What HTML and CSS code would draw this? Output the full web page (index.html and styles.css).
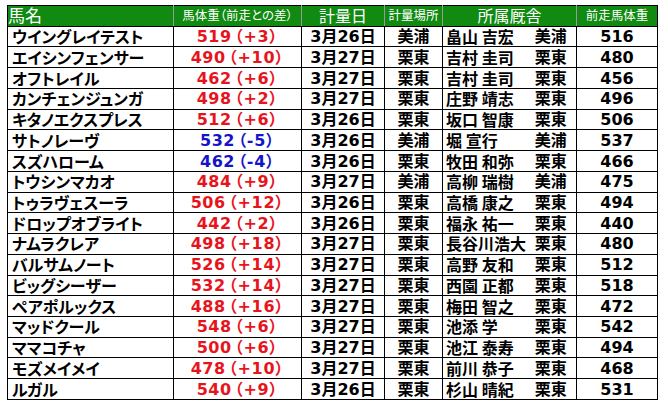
FILE: index.html
```html
<!DOCTYPE html>
<html lang="ja">
<head>
<meta charset="utf-8">
<title>馬体重</title>
<link rel="stylesheet" href="styles.css">
</head>
<body>
<table class="weights">
<colgroup>
<col class="c-name"><col class="c-wt"><col class="c-date"><col class="c-place"><col class="c-trainer"><col class="c-loc"><col class="c-prev">
</colgroup>
<thead>
<tr>
<th class="h-name">馬名</th>
<th class="h-small">馬体重（前走との差）</th>
<th class="h-mid">計量日</th>
<th class="h-small">計量場所</th>
<th class="h-mid" colspan="2">所属厩舎</th>
<th class="h-small">前走馬体重</th>
</tr>
</thead>
<tbody>
<tr><td class="name">ウイングレイテスト</td><td class="wt up">519<span class="diff">（+3）</span></td><td class="ctr">3月26日</td><td class="ctr">美浦</td><td class="trainer">畠山 吉宏</td><td class="loc">美浦</td><td class="ctr">516</td></tr>
<tr><td class="name">エイシンフェンサー</td><td class="wt up">490<span class="diff">（+10）</span></td><td class="ctr">3月27日</td><td class="ctr">栗東</td><td class="trainer">吉村 圭司</td><td class="loc">栗東</td><td class="ctr">480</td></tr>
<tr><td class="name">オフトレイル</td><td class="wt up">462<span class="diff">（+6）</span></td><td class="ctr">3月27日</td><td class="ctr">栗東</td><td class="trainer">吉村 圭司</td><td class="loc">栗東</td><td class="ctr">456</td></tr>
<tr><td class="name">カンチェンジュンガ</td><td class="wt up">498<span class="diff">（+2）</span></td><td class="ctr">3月27日</td><td class="ctr">栗東</td><td class="trainer">庄野 靖志</td><td class="loc">栗東</td><td class="ctr">496</td></tr>
<tr><td class="name">キタノエクスプレス</td><td class="wt up">512<span class="diff">（+6）</span></td><td class="ctr">3月26日</td><td class="ctr">栗東</td><td class="trainer">坂口 智康</td><td class="loc">栗東</td><td class="ctr">506</td></tr>
<tr><td class="name">サトノレーヴ</td><td class="wt down">532<span class="diff">（-5）</span></td><td class="ctr">3月26日</td><td class="ctr">美浦</td><td class="trainer">堀 宣行</td><td class="loc">美浦</td><td class="ctr">537</td></tr>
<tr><td class="name">スズハローム</td><td class="wt down">462<span class="diff">（-4）</span></td><td class="ctr">3月26日</td><td class="ctr">栗東</td><td class="trainer">牧田 和弥</td><td class="loc">栗東</td><td class="ctr">466</td></tr>
<tr><td class="name">トウシンマカオ</td><td class="wt up">484<span class="diff">（+9）</span></td><td class="ctr">3月27日</td><td class="ctr">美浦</td><td class="trainer">高柳 瑞樹</td><td class="loc">美浦</td><td class="ctr">475</td></tr>
<tr><td class="name">トゥラヴェスーラ</td><td class="wt up">506<span class="diff">（+12）</span></td><td class="ctr">3月26日</td><td class="ctr">栗東</td><td class="trainer">高橋 康之</td><td class="loc">栗東</td><td class="ctr">494</td></tr>
<tr><td class="name">ドロップオブライト</td><td class="wt up">442<span class="diff">（+2）</span></td><td class="ctr">3月26日</td><td class="ctr">栗東</td><td class="trainer">福永 祐一</td><td class="loc">栗東</td><td class="ctr">440</td></tr>
<tr><td class="name">ナムラクレア</td><td class="wt up">498<span class="diff">（+18）</span></td><td class="ctr">3月27日</td><td class="ctr">栗東</td><td class="trainer">長谷川浩大</td><td class="loc">栗東</td><td class="ctr">480</td></tr>
<tr><td class="name">バルサムノート</td><td class="wt up">526<span class="diff">（+14）</span></td><td class="ctr">3月27日</td><td class="ctr">栗東</td><td class="trainer">高野 友和</td><td class="loc">栗東</td><td class="ctr">512</td></tr>
<tr><td class="name">ビッグシーザー</td><td class="wt up">532<span class="diff">（+14）</span></td><td class="ctr">3月27日</td><td class="ctr">栗東</td><td class="trainer">西園 正都</td><td class="loc">栗東</td><td class="ctr">518</td></tr>
<tr><td class="name">ペアポルックス</td><td class="wt up">488<span class="diff">（+16）</span></td><td class="ctr">3月27日</td><td class="ctr">栗東</td><td class="trainer">梅田 智之</td><td class="loc">栗東</td><td class="ctr">472</td></tr>
<tr><td class="name">マッドクール</td><td class="wt up">548<span class="diff">（+6）</span></td><td class="ctr">3月27日</td><td class="ctr">栗東</td><td class="trainer">池添 学</td><td class="loc">栗東</td><td class="ctr">542</td></tr>
<tr><td class="name">ママコチャ</td><td class="wt up">500<span class="diff">（+6）</span></td><td class="ctr">3月27日</td><td class="ctr">栗東</td><td class="trainer">池江 泰寿</td><td class="loc">栗東</td><td class="ctr">494</td></tr>
<tr><td class="name">モズメイメイ</td><td class="wt up">478<span class="diff">（+10）</span></td><td class="ctr">3月27日</td><td class="ctr">栗東</td><td class="trainer">前川 恭子</td><td class="loc">栗東</td><td class="ctr">468</td></tr>
<tr><td class="name">ルガル</td><td class="wt up">540<span class="diff">（+9）</span></td><td class="ctr">3月26日</td><td class="ctr">栗東</td><td class="trainer">杉山 晴紀</td><td class="loc">栗東</td><td class="ctr">531</td></tr>
</tbody>
</table>
</body>
</html>
```

FILE: styles.css
```css
html, body {
  margin: 0;
  padding: 0;
  background: #ffffff;
}

body {
  padding: 5px 0 0 7px;
}

.weights {
  border-collapse: collapse;
  table-layout: fixed;
  width: 651px;
  font-family: "DejaVu Sans", "Noto Sans CJK JP", sans-serif;
  font-feature-settings: "palt";
  color: #000;
}

.c-name { width: 166px; }
.c-wt { width: 128px; }
.c-date { width: 83px; }
.c-place { width: 58px; }
.c-trainer { width: 83px; }
.c-loc { width: 51px; }
.c-prev { width: 81px; }

.weights tr {
  height: 20.74px;
}

.weights th {
  background: #108a10;
  color: #ffffff;
  font-family: "Noto Sans CJK JP", sans-serif;
  font-weight: 400;
  border: 1px solid #9a9a9a;
  border-top-color: #000;
  border-bottom-color: #000;
  padding: 0;
  line-height: 18px;
  vertical-align: top;
  white-space: nowrap;
}

.weights th:first-child { border-left-color: #000; }
.weights th:last-child { border-right-color: #000; }

.h-name {
  text-align: left;
  padding-left: 4px;
  font-size: 17px;
}

.h-mid {
  font-size: 16px;
}

.h-small {
  font-size: 12.5px;
}

.weights td {
  border: 1px solid #000;
  padding: 0;
  font-size: 16px;
  font-weight: 700;
  line-height: 19px;
  white-space: nowrap;
  vertical-align: middle;
}

.name {
  padding-left: 4px !important;
  font-family: "Noto Sans CJK JP", sans-serif;
}

.ctr, .wt {
  text-align: center;
}

.wt {
  letter-spacing: 0.5px;
}

.diff {
  margin-left: 3px;
  letter-spacing: 0.8px;
}

.up { color: #e8141c; }
.down { color: #1414c8; }

.trainer {
  padding-left: 3px !important;
  border-right: none !important;
  font-family: "Noto Sans CJK JP", sans-serif;
}

.loc {
  border-left: none !important;
  text-align: center;
}
```
